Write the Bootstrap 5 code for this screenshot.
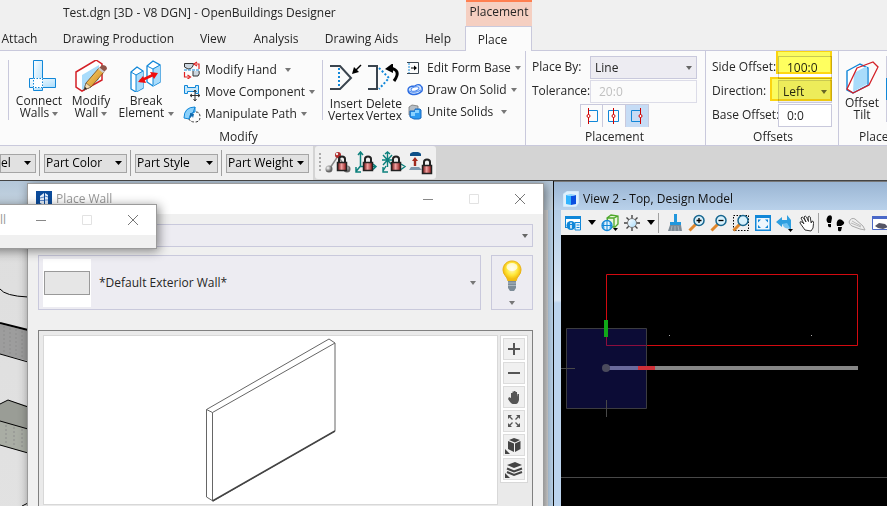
<!DOCTYPE html>
<html lang="en">
<head>
<meta charset="utf-8">
<meta name="viewport" content="width=device-width, initial-scale=1">
<title>OpenBuildings Designer</title>
<link href="https://cdn.jsdelivr.net/npm/bootstrap@5.3.0/dist/css/bootstrap.min.css" rel="stylesheet">
<style>
:root{--line:#c9c9dc;--face:#edecf2;--blue:#1187d8}
body{font-family:"Open Sans","Noto Sans",sans-serif;font-size:12px;line-height:16px;color:#262626;background:#d4d4d4}
svg{display:block;flex:none}
button,select,input{font:inherit;color:inherit;border-radius:0}
button{background:none;border:0;padding:0}
.app-shell{height:100vh}
.app-head{background:#f0f0f0;height:51px;box-shadow:inset 0 -1px var(--line);flex:none}
.app-title{height:26px;padding-left:63px;width:466px}
.context-tab{width:66px;height:26px;background:#f5cfc1;border-top:2px solid #ff7f50;padding-top:2px;white-space:nowrap}
.tab-strip{height:25px}
.tab-strip button{flex:0 0 auto;height:25px;white-space:nowrap;line-height:23px}
.w-a{width:51px;padding-right:12px}.w-b{width:135px}.w-c{width:54px}.w-d{width:72px}.w-e{width:99px}
.tab-strip .tab-on{width:67px;background:#fbfbfb;border:1px solid var(--line);border-bottom:0;padding-right:12px}
.ribbon{background:#fbfbfb;border-bottom:1px solid var(--line);height:95px;flex:none}
.rib-group{padding-top:5px}
.rib-group+.rib-group{border-left:1px solid var(--line)}
.rib-body{height:73px}
.rib-label{height:16px;line-height:16px}
.inner-rule{width:1px;height:60px;margin-top:4px;background:var(--line);flex:none}
.big-btn{line-height:12px;display:flex;flex-direction:column;align-items:center;text-align:center;white-space:nowrap;flex:none}
.big-btn svg.pic{margin-bottom:3px}
.b-48{width:46px}.b-52{width:52px}.b-58{width:58px}.b-38{width:38px}
.col-edit{width:147px;padding:3px 0 0 8px}
.col-solid{width:122px;padding:1px 0 0 4px}
.small-btn{height:22px;display:flex;align-items:center;white-space:nowrap}
.tri{display:inline-block;width:0;height:0;border:3px solid transparent;border-top:4px solid #777;border-bottom:0;vertical-align:middle}
.field-row{height:24px}
.fld{height:23px;border:1px solid var(--line);background:#fff;padding:0 8px;min-width:0}
select.fld,.tool-select{appearance:none;background:var(--face) url("data:image/svg+xml,%3Csvg xmlns='http://www.w3.org/2000/svg' width='6' height='4'%3E%3Cpath d='M0 0h6L3 4z' fill='%23666'/%3E%3C/svg%3E") no-repeat right 4px center}
select.fld{padding-left:4px}
.fld:disabled{color:#c0c0c0;background:#fbfbfb;opacity:1;border-color:#dcdce8}
.group-placement{width:180px;padding-left:6px}
.lbl-a{width:58px;line-height:22px;white-space:nowrap}.sel-a{width:107px}
.seg-row{padding-left:48px}
.seg{width:23px;height:23px;border:1px solid var(--line);border-bottom:0}
.seg+.seg{border-left:0}
.seg-on{background:#c6dcf5}
.group-offsets{width:133px;padding-left:6px}
.lbl-b{width:66px;line-height:22px;white-space:nowrap}.sel-b{width:54px}
.hl{position:absolute;background:#ffff00a0;border:2px solid #ffcf00d0;mix-blend-mode:multiply;pointer-events:none}
.hl-one{left:64px;top:-6px;width:56px;height:24px}
.hl-two{left:58px;top:-3px;width:62px;height:24px}
.edge-strip{width:20px;height:66px;margin-left:1px;background:linear-gradient(#ccd 0 22px,#1187d8 22px 44px,#ccd 44px)}
.last-label{padding-left:20px}
.toolbars{height:35px;border-bottom:1px solid #444;flex:none}
.bar-a{background:#f0f0f0;width:313px;height:34px}
.bar-b{background:#f0f0f0;border-radius:3px;height:33px;width:121px;margin-left:2px}
.tool-select{height:19px;border:1px solid #a5a5a5;background-color:#e1e1e1;padding:0 0 0 1px;color:#000;width:83px;background-image:url("data:image/svg+xml,%3Csvg xmlns='http://www.w3.org/2000/svg' width='7' height='4'%3E%3Cpath d='M0 0h7L3.5 4z' fill='%23000'/%3E%3C/svg%3E")}
.sel-cut{width:36px;padding:0}
.v-rule{width:1px;height:26px;background:#a0a0a0;margin:0 4px 0 3px}
.grip{width:2px;height:20px;background:repeating-linear-gradient(#aaa 0 2px,transparent 2px 4px)}
.workspace{min-height:0}
.pane-left{width:554px;background:linear-gradient(90deg,#bccde0,#bcd5ec);border-right:1px solid #111}
.pane-head{height:29px;background:linear-gradient(#b4c7d9,#c8d6e2)}
.pane-scene{height:100%;width:548px;background:linear-gradient(#dedede,#e2e2e2)}
.dlg{position:absolute;background:#f0f0f0;border:1px solid #9b9b9b;box-shadow:2px 2px 10px #0007}
.dlg-place{left:27px;top:2px;width:517px;height:400px}
.dlg-front{left:-200px;top:23px;width:357px;height:45px}
.dlg-title{background:#fff;height:30px;color:#999}
.dlg-buttons{width:138px}
.front-gap{margin-left:12px}
.dlg-body{padding:10px 10px 0}
.combo-btn{height:55px;border:1px solid var(--line);background:var(--face)}
.thumb{width:48px;height:48px;background:#fff}
.thumb span{width:46px;height:24px;border:1px solid #999;background:#e6e6e6}
.bulb-btn{width:42px;margin-left:10px}
.preview{border:1px solid #808080;background:#eaeaea;margin-top:20px;padding:4px;height:260px}
.preview-page{height:170px;background:#fff;border:1px solid #d8d8d8}
.preview-tools{width:28px;height:148px;background:#fff;border:1px solid #d8d8d8;padding-top:2px;gap:2px;margin-left:2px}
.preview-tools button{width:22px;height:22px;background:#f0f0f0;border:1px solid #dcdcdc}
.view-win{background:linear-gradient(#a2c0de 0,#b9d1ea 40px,#d9e6f4 118px,#bcd4ee 121px);padding-left:7px;border-top:1px solid #777}
.view-title{height:28px;background:linear-gradient(#9ab5d3,#b9d1ea);margin-left:-7px;padding-left:9px;padding-top:6px;color:#111}
.view-name{margin-left:4px}
.view-tools{height:25px;background:#f0f0f0;padding-left:1px}
.view-tools button{width:22px;flex:none;display:flex;justify-content:center}
.view-tools .drop{width:15px}
.tool-gap{width:6px;flex:none}
.tool-gap span{width:1px;height:20px;background:#a0a0a0}
.tri-black{border:4px solid transparent;border-top:5px solid #000;border-bottom:0}
.canvas-black{background:#000;min-height:0}
</style>
<script src="https://cdn.jsdelivr.net/npm/bootstrap@5.3.0/dist/js/bootstrap.bundle.min.js"></script>
</head>
<body class="overflow-hidden">
<svg width="0" height="0" class="position-absolute" aria-hidden="true">
<defs>
<linearGradient id="sky" x2="1" y2="1"><stop stop-color="#fff"/><stop offset="1" stop-color="#a9dcfb"/></linearGradient>
<linearGradient id="lockred"><stop stop-color="#6b0d0d"/><stop offset=".45" stop-color="#f0a0a0"/><stop offset="1" stop-color="#8c1212"/></linearGradient>
<linearGradient id="gold" x2="1" y2="1"><stop stop-color="#ffe07a"/><stop offset="1" stop-color="#c87a10"/></linearGradient>
<radialGradient id="ball" cx=".35" cy=".35"><stop stop-color="#fff"/><stop offset="1" stop-color="#666"/></radialGradient>
<radialGradient id="glow" cy=".4"><stop stop-color="#fffbd0"/><stop offset=".6" stop-color="#ffe93c"/><stop offset="1" stop-color="#f3bd10"/></radialGradient>
<symbol id="lock" viewBox="0 0 12 17"><path d="M3 8V4q0-2.500 3-2.500T9 4v4" fill="none" stroke="#222" stroke-width="2"/><path d="M1.500 7.500h9v8h-9z" fill="url(#lockred)" stroke="#222" stroke-width="1.500"/></symbol>
<symbol id="lens" viewBox="0 0 18 18"><path d="M1.500 16.500L8 10" stroke="#e0862a" stroke-width="3"/><circle cx="11" cy="6.500" r="5" fill="#d8f1fc" stroke="#17668f" stroke-width="1.500"/></symbol>
</defs>
</svg>

<div class="app-shell d-flex flex-column">
<header class="app-head">
  <div class="d-flex">
    <div class="app-title d-flex align-items-center text-nowrap">Test.dgn [3D - V8 DGN] - OpenBuildings Designer</div>
    <div class="context-tab text-center">Placement</div>
  </div>
  <nav class="tab-strip d-flex" aria-label="Ribbon tabs">
    <button class="w-a">Attach</button><button class="w-b">Drawing Production</button><button class="w-c">View</button><button class="w-d">Analysis</button><button class="w-e">Drawing Aids</button><button class="w-c">Help</button><button class="tab-on">Place</button>
  </nav>
</header>

<section class="ribbon d-flex overflow-hidden">
  <div class="rib-group flex-shrink-0">
    <div class="rib-body d-flex ps-2">
      <div class="inner-rule"></div>
      <div class="d-flex ps-1 pt-1">
        <button class="big-btn b-52"><svg class="pic" width="34" height="32"><path d="M11.500 .500h9v30h-9z" fill="url(#sky)" stroke="#1187d8"/><path d="M7.500 18.500h26v9h-26z" fill="url(#sky)" stroke="#1187d8"/><path d="M11.500 18.500h9v9h-9z" fill="#fff" stroke="#fff"/><path d="M11.500 18.500h9v9h-9z" fill="none" stroke="#1187d8" stroke-dasharray="1.500 1.500"/></svg>Connect<br><span>Walls <i class="tri"></i></span></button>
        <button class="big-btn b-52"><svg class="pic" width="34" height="32" viewBox="0 2 34 32"><path d="M2 14L22 2l6 4v16L8 33l-6-4z" fill="#fff" stroke="#d42027" stroke-width="1.500"/><path d="M8 17L25 7v15L8 32z" fill="#a9dcfb"/><path d="M10 32l2-7L25 10l5 4-13 15z" fill="url(#gold)" stroke="#75420e" stroke-width=".8"/><path d="M10 32l2-7 5 4z" fill="#f6ddb0" stroke="#555" stroke-width=".6"/><path d="M10 32l1-3 2 1.600z" fill="#222"/><path d="M25 10l3-3q5 0 5 4l-3 3z" fill="#8f5448"/><path d="M24 11l5 4 1.500-1.500-5-4z" fill="#ccc"/></svg>Modify<br><span>Wall <i class="tri"></i></span></button>
        <button class="big-btn b-58"><svg class="pic" width="34" height="32" viewBox="0 1 34 32"><path d="M2 13l6-5 6 4v17l-7 4-5-3z M18 7l6-5 7 4v17l-7 4-6-4z" fill="#fff" stroke="#1187d8" stroke-width="1.300"/><path d="M7 16l7-4v17l-7 4zM24 9l7-3v17l-7 4z" fill="#a9dcfb"/><path d="M2 13l5 3v17m0-17l7-4M18 7l6 3v16m0-16l7-4" fill="none" stroke="#1187d8"/><path d="M11 22l15-7" stroke="#f00d0d" stroke-width="2.500"/><path d="M9 23l5-6 3 7zM29 14l-8-1 4 7z" fill="#f00d0d"/></svg>Break<br><span>Element <i class="tri"></i></span></button>
      </div>
      <div class="col-edit">
        <button class="small-btn"><svg width="18" height="18"><path d="M1.500 6V2.500h9Q10 8 5 8zM10 10v5h5q2-2 1-5" fill="#ccd6df" stroke="#333"/><path d="M1 9h15" stroke="#1187d8" stroke-dasharray="3 1"/><path d="M1.500 11v5h4m-1-2l3 2-3 2M16 8V3h-3m1-2l-3 2 3 2" fill="none" stroke="#e02020" stroke-width="1.200"/></svg><span class="ms-1">Modify Hand</span><i class="tri ms-2"></i></button>
        <button class="small-btn"><svg width="18" height="18"><path d="M1.500 2.500h3v2h8v-2h3v8h-3v-2h-8v2h-3z" fill="#c5e8fc" stroke="#1187d8"/><path d="M12 7v11M7 12.500h10M10.500 9L12 7l1.500 2m-3 7l1.500 2 1.500-2M9 11l-2 1.500L9 14m6-3l2 1.500-2 1.500" fill="none" stroke="#333"/></svg><span class="ms-1">Move Component</span><i class="tri ms-1"></i></button>
        <button class="small-btn"><svg width="18" height="18"><path d="M1 13Q1 2 12 2v5Q7 7 6 14z" fill="#8bd0fa" stroke="#1187d8"/><path d="M12 2l-2 6-4 6" stroke="#1187d8" fill="none"/><path d="M7 8l4 1-1 4-1-2-2 2" fill="#1269ac"/><path d="M13 7q4 0 4 5t-5 5-6-3" fill="none" stroke="#333" stroke-dasharray="2.500 1.500"/></svg><span class="ms-1">Manipulate Path</span><i class="tri ms-1"></i></button>
      </div>
      <div class="inner-rule"></div>
      <div class="d-flex pt-2 ps-1">
        <button class="big-btn b-38"><svg class="pic" width="34" height="31" viewBox="0 3 34 31"><path d="M1 5h10L22 17 11 28H1" fill="none" stroke="#3a444e" stroke-width="2"/><path d="M10 7v20" stroke="#1187d8" stroke-width="2" stroke-dasharray="2 2"/><path d="M32 4l-6 6" stroke="#000" stroke-width="1.500"/><path d="M23 13l2-7 5 5z"/></svg>Insert<br>Vertex</button>
        <button class="big-btn b-38"><svg class="pic" width="34" height="31" viewBox="0 3 34 31"><path d="M1 5h9v23H1" fill="none" stroke="#3a444e" stroke-width="2"/><path d="M12 7l10 10-10 11" fill="none" stroke="#1187d8" stroke-width="2" stroke-dasharray="2 2"/><path d="M23 7q12 2 4 13" fill="none" stroke="#000" stroke-width="3"/><path d="M18 8l8-6v10z"/></svg>Delete<br>Vertex</button>
      </div>
      <div class="col-solid">
        <button class="small-btn"><svg width="16" height="16"><path d="M0 2.500h11.500v11H0" fill="none" stroke="#3a444e"/><path d="M2 3v10" stroke="#1187d8" stroke-dasharray="2 1"/><path d="M4 8h4" stroke="#000"/><path d="M7 5.500L10 8l-3 2.500z"/></svg><span class="ms-1">Edit Form Base</span><i class="tri ms-1"></i></button>
        <button class="small-btn"><svg width="16" height="16"><path d="M1 8q0-4 7-4 2-2 5-1 3 2 2 6-5 5-11 3Q1 11 1 8z" fill="#d7e9ff" stroke="#2b6be0" stroke-width="1.400"/><ellipse cx="8" cy="7" rx="4" ry="2" fill="#fff" stroke="#4b87ee" transform="rotate(-15 8 7)"/><path d="M2 9q5 3 12-1" stroke="#4b87ee" fill="none"/></svg><span class="ms-1">Draw On Solid</span><i class="tri ms-1"></i></button>
        <button class="small-btn"><svg width="16" height="16"><path d="M2 3l3-2 6 1v8l-3 2-6-1z" fill="#b6bec6" stroke="#777" stroke-width=".8"/><path d="M3 7h5V5h5l1 1v8l-2 1H7l-4-2z" fill="#2d9af0" stroke="#1768c0"/><path d="M4 8h4V6h4v3H8v3H4z" fill="#8ad2ff"/></svg><span class="ms-1">Unite Solids</span><i class="tri ms-2"></i></button>
      </div>
    </div>
    <div class="rib-label text-center pe-5">Modify</div>
  </div>

  <div class="rib-group group-placement flex-shrink-0">
    <div class="rib-body">
      <div class="field-row d-flex"><label class="lbl-a" for="placeBy">Place By:</label><select id="placeBy" class="fld sel-a"><option>Line</option></select></div>
      <div class="field-row d-flex"><label class="lbl-a" for="tol">Tolerance:</label><input id="tol" class="fld sel-a" value="20:0" disabled></div>
      <div class="seg-row d-flex">
        <button class="seg" aria-label="Place left"><svg width="21" height="22"><path d="M7 5.500h9.500v11H7" fill="none" stroke="#1187d8"/><path d="M7.500 3v16" stroke="#d00000"/><circle cx="7.500" cy="11" r="1.500" fill="#fff" stroke="#d00000"/></svg></button><button class="seg" aria-label="Place center"><svg width="21" height="22"><path d="M5.500 5.500h10v11h-10z" fill="none" stroke="#1187d8"/><path d="M10.500 3v16" stroke="#d00000"/><circle cx="10.500" cy="11" r="1.500" fill="#fff" stroke="#d00000"/></svg></button><button class="seg seg-on" aria-label="Place right"><svg width="21" height="22"><path d="M14 5.500H5.500v11H14" fill="none" stroke="#1187d8"/><path d="M14.500 3v16" stroke="#d00000"/><circle cx="14.500" cy="11" r="1.500" fill="#fff" stroke="#d00000"/></svg></button>
      </div>
    </div>
    <div class="rib-label text-center pe-2">Placement</div>
  </div>

  <div class="rib-group group-offsets flex-shrink-0">
    <div class="rib-body">
      <div class="field-row d-flex position-relative"><label class="lbl-b" for="side">Side Offset:</label><input id="side" class="fld sel-b" value="100:0"><span class="hl hl-one"></span></div>
      <div class="field-row d-flex position-relative"><label class="lbl-b" for="dir">Direction:</label><select id="dir" class="fld sel-b"><option>Left</option></select><span class="hl hl-two"></span></div>
      <div class="field-row d-flex"><label class="lbl-b" for="base">Base Offset:</label><input id="base" class="fld sel-b" value="0:0"></div>
    </div>
    <div class="rib-label text-center pe-1">Offsets</div>
  </div>

  <div class="rib-group flex-fill overflow-hidden">
    <div class="rib-body d-flex">
      <button class="big-btn b-48 pt-1"><svg class="pic" width="34" height="34"><path d="M2 11L15 4l8 4v17L8 33l-6-3z" fill="#fff" stroke="#1187d8" stroke-width="1.400"/><path d="M9 13l13-7v18L8 32z" fill="#a9dcfb"/><path d="M12 8l16-6 5 5-9 18L8 33l-6-4z" fill="none" stroke="#d42027" stroke-width="1.300"/></svg>Offset<br>Tilt</button>
      <div class="edge-strip flex-shrink-0"></div>
    </div>
    <div class="rib-label last-label text-nowrap">Place</div>
  </div>
</section>

<div class="toolbars d-flex">
  <div class="bar-a d-flex align-items-center overflow-hidden">
    <select class="tool-select sel-cut" aria-label="Part Level"><option>el</option></select><span class="v-rule"></span>
    <select class="tool-select" aria-label="Part Color"><option>Part Color</option></select><span class="v-rule"></span>
    <select class="tool-select" aria-label="Part Style"><option>Part Style</option></select><span class="v-rule"></span>
    <select class="tool-select" aria-label="Part Weight"><option>Part Weight</option></select>
  </div>
  <div class="bar-b d-flex align-items-center ps-1">
    <span class="grip me-1"></span>
    <button aria-label="Graphic group lock"><svg width="26" height="24"><path d="M5 17L13 5l8 12" stroke="#888" stroke-width="1.500" fill="none"/><circle cx="4" cy="18" r="3.500" fill="url(#ball)"/><circle cx="22" cy="18" r="3.500" fill="url(#ball)"/><circle cx="13" cy="4" r="3" fill="#b02a2a"/><circle cx="12" cy="3" r="1.200" fill="#eee"/><use href="#lock" x="11" y="4" width="12" height="17"/></svg></button>
    <button class="ms-1" aria-label="ACS lock"><svg width="26" height="24"><path d="M5.500 1v14L1 20.500M5 15.500h15M3 4l2.500-3L8 4M1 16v5h5M18 13l3 2.500-3 3" fill="none" stroke="#0b807c" stroke-width="1.500"/><use href="#lock" x="7" y="4" width="12" height="17"/></svg></button>
    <button aria-label="Snap lock"><svg width="28" height="24"><path d="M6.500 1v15M1 9h12M2 4l9 10M11 4L2 14M4 3l2.500-2L9 3M5 15l-3 5m0-4v5h5M20 13l4 2.500-4 3" fill="none" stroke="#0b807c" stroke-width="1.400"/><use href="#lock" x="9" y="4" width="12" height="17"/></svg></button>
    <button aria-label="Level lock"><svg width="26" height="24"><path d="M1 3q0-1 3-2h5q3 1 3 2v2H1z" fill="#0e4f87"/><path d="M6 6l3 4H7.200v5H4.800v-5H3z" fill="#a12a1e"/><path d="M2 16h8l3 3H0z" fill="#7f98ac"/><use href="#lock" x="12" y="7" width="12" height="17"/></svg></button>
  </div>
</div>

<main class="workspace d-flex flex-fill overflow-hidden">
  <section class="pane-left position-relative flex-shrink-0 overflow-hidden d-flex flex-column" aria-label="View 1">
    <div class="pane-head flex-shrink-0"></div>
    <div class="pane-scene"><svg width="548" height="320" viewBox="0 210 548 320" aria-hidden="true">
      <path d="M0 324l28 7v30l-28-7z" fill="#9d9d9d"/><path d="M0 404l8-4 20 6v47l-28-8z" fill="#9a9d96"/><path d="M0 421l28 8v24l-28-8z" fill="#a9ada4"/>
      <path d="M0 289q5 7 28 8M0 354l28 8M0 404l8-4 20 7M0 421l28 8M0 445l28 8M22 506l6-3" fill="none" stroke="#000"/><path d="M0 323l28 7" stroke="#000" stroke-width="2"/>
      <path d="M4 326v28M10 328v28M16 329v28M22 331v28M6 425v20M14 427v20M22 429v20" stroke="#8d8d8d" stroke-dasharray="2 2"/>
    </svg></div>

    <section class="dlg dlg-place" aria-label="Place Wall">
      <div class="dlg-title d-flex align-items-center ps-2">
        <svg width="16" height="16"><rect width="16" height="16" fill="#0b4b9b"/><path d="M4 5l4-3v12l-4-2zM9 2l3 2v9l-3 1z" fill="#e4eefb"/><path d="M4 7l4-1M4 9.500h4M9 5l3 1M9 9h3M2 13l6 2" stroke="#5a86c8"/></svg>
        <span class="ms-1 flex-fill">Place Wall</span>
        <div class="dlg-buttons d-flex"><button class="flex-fill" aria-label="Minimize"><svg class="mx-auto" width="12" height="12"><path d="M1 6.500h10" stroke="#888"/></svg></button><button class="flex-fill" aria-label="Maximize"><svg class="mx-auto" width="12" height="12"><path d="M1.500 1.500h9v9h-9z" fill="none" stroke="#e2e2e2"/></svg></button><button class="flex-fill" aria-label="Close"><svg class="mx-auto" width="12" height="12"><path d="M1 1l10 10M11 1L1 11" stroke="#777"/></svg></button></div>
      </div>
      <div class="dlg-body">
        <select class="fld w-100 d-block" aria-label="Catalog"><option></option></select>
        <div class="d-flex mt-2">
          <button class="combo-btn flex-fill d-flex align-items-center px-1"><span class="thumb d-flex align-items-center justify-content-center"><span></span></span><span class="ms-2">*Default Exterior Wall*</span><i class="tri ms-auto"></i></button>
          <button class="combo-btn bulb-btn d-flex flex-column align-items-center justify-content-between" aria-label="Hints"><svg class="mt-1" width="22" height="32"><path d="M11 1C5.500 1 2 5 2 10c0 5 4 6 5 11h8c1-5 5-6 5-11 0-5-3.500-9-9-9z" fill="url(#glow)" stroke="#eab416"/><ellipse cx="11" cy="7" rx="5.500" ry="4" fill="#fff" opacity=".7"/><path d="M7 21h8v7l-2 3H9l-2-3z" fill="#7d8c98"/><path d="M7 23h8M7 25.500h8" stroke="#aab6bf"/></svg><i class="tri mb-1"></i></button>
        </div>
        <div class="preview d-flex">
          <div class="preview-page flex-fill"><svg width="452" height="168" viewBox="44 336 452 168" aria-hidden="true"><path d="M206.500 409.500L329 339l6 4v88l-122 70-6.500-4z M206.500 409.500l6 3L335 343M212.500 412.500V501" fill="none" stroke="#666"/><path d="M212.500 501L335 431" stroke="#444" stroke-width="1.600"/></svg></div>
          <div class="preview-tools d-flex flex-column align-items-center">
            <button aria-label="Zoom in"><svg width="20" height="20"><path d="M10 4v12M4 10h12" stroke="#555" stroke-width="2"/></svg></button>
            <button aria-label="Zoom out"><svg width="20" height="20"><path d="M4 10h12" stroke="#555" stroke-width="2"/></svg></button>
            <button aria-label="Pan"><svg width="20" height="20"><path d="M5 10l2 1V6h1.500v3V4.500H10V9V4h1.500v5V5H13v5l.500-3H15v6q-1 4-3 4H9q-2 0-5-5z" fill="#555"/></svg></button>
            <button aria-label="Fit"><svg width="20" height="20"><path d="M4 8V4h4zM12 4h4v4zM4 12v4h4zM16 12v4h-4z" fill="#555"/><path d="M5 5l3.500 3.500M15 5l-3.500 3.500M5 15l3.500-3.500M15 15l-3.500-3.500" stroke="#555" stroke-width="1.300"/></svg></button>
            <button aria-label="View rotation"><svg width="20" height="20"><path d="M5 5l5-2 6 2-5 2.500zM4 6l6 2.500V17l-6-3zM16.500 6L11 8.500V17l5.500-3z" fill="#444"/><path d="M1 14v5h5z" fill="#444"/></svg></button>
            <button aria-label="Display style"><svg width="20" height="20"><path d="M3 6l8-3 7 3-8 3z" fill="#444"/><path d="M3 9.500l7 3 8-3M3 13l7 3 8-3" fill="none" stroke="#444" stroke-width="2"/><path d="M1 14v5h5z" fill="#444"/></svg></button>
          </div>
        </div>
      </div>
    </section>

    <section class="dlg dlg-front" aria-label="Wall">
      <div class="dlg-title d-flex align-items-center justify-content-end"><span>Wall</span>
        <div class="dlg-buttons front-gap d-flex"><button class="flex-fill" aria-label="Minimize"><svg class="mx-auto" width="12" height="12"><path d="M1 6.500h10" stroke="#888"/></svg></button><button class="flex-fill" aria-label="Maximize"><svg class="mx-auto" width="12" height="12"><path d="M1.500 1.500h9v9h-9z" fill="none" stroke="#e2e2e2"/></svg></button><button class="flex-fill" aria-label="Close"><svg class="mx-auto" width="12" height="12"><path d="M1 1l10 10M11 1L1 11" stroke="#777"/></svg></button></div>
      </div>
    </section>
  </section>

  <section class="view-win flex-fill d-flex flex-column overflow-hidden" aria-label="View 2">
    <div class="view-title d-flex align-items-center flex-shrink-0"><svg width="16" height="16"><path d="M0 3l4-3h12v12l-3 4H0z" fill="#dff0fc" stroke="#b5d8f4" stroke-width=".6"/><path d="M3 4l5 1v9l-5-1z" fill="#32b4ff"/><path d="M8 5l5-1v9l-5 1z" fill="#0a4fe0"/><path d="M3 4l5-1 5 1-5 1z" fill="#8bd5ff"/></svg><span class="view-name">View 2 - Top, Design Model</span></div>
    <div class="view-tools d-flex align-items-center flex-shrink-0">
      <button aria-label="View attributes"><svg width="18" height="18"><path d="M1 2h16v12H1z" fill="#1187d8"/><path d="M2 5h14v8H2z" fill="#fff"/><circle cx="7" cy="11.500" r="4.500" fill="#1187d8"/><path d="M7 8.500v1.500M7 11v3.500" stroke="#fff" stroke-width="1.500"/><path d="M11 8.500h5.500v7.500H11z" fill="#e8f5fd" stroke="#1187d8"/><path d="M12.500 11h3M12.500 13.500h3" stroke="#1187d8"/></svg></button><button class="drop" aria-label="View attributes menu"><i class="tri tri-black"></i></button>
      <button aria-label="Models"><svg width="18" height="18"><path d="M6 4l4-3 7 1v8l-3 3H8z M6 4h7v9M13 4l4-2" fill="#eaf7dc" stroke="#4fa82b" stroke-width="1.300"/><circle cx="6" cy="11.500" r="5" fill="#e5f4fd" stroke="#1187d8" stroke-width="1.300"/><path d="M1 11.500h10M6 7v9M3 8.500q-1 3 0 6M9 8.500q1 3 0 6" fill="none" stroke="#1187d8"/><path d="M12 14h5l-2.500 3z"/></svg></button>
      <button aria-label="Brightness"><svg width="18" height="18"><path d="M9 1v16M1 9h16M3.500 3.500l11 11M14.500 3.500l-11 11" stroke="#444" stroke-width="1.400"/><circle cx="9" cy="9" r="4.500" fill="url(#sky)" stroke="#777"/></svg></button><button class="drop" aria-label="Brightness menu"><i class="tri tri-black"></i></button>
      <div class="tool-gap d-flex"><span></span></div>
      <button aria-label="Update view"><svg width="18" height="18"><path d="M8 0h3v8h4v3H4V8h4z" fill="#2297dc"/><path d="M4 11h11l1 6H2z" fill="#7d8a95"/><path d="M6 12l-1 5M9 12v5M12 12l1 5" stroke="#a9b4bd"/></svg></button>
      <button aria-label="Zoom in"><svg width="18" height="18"><use href="#lens" width="18" height="18"/><path d="M8.500 6.500h5M11 4v5" stroke="#000" stroke-width="1.300"/></svg></button>
      <button aria-label="Zoom out"><svg width="18" height="18"><use href="#lens" width="18" height="18"/><path d="M8.500 6.500h5" stroke="#000" stroke-width="1.300"/></svg></button>
      <button aria-label="Window area"><svg width="18" height="18"><path d="M1.500 1.500h15v15h-15z" fill="none" stroke="#000" stroke-dasharray="1.500 1.500"/><use href="#lens" width="18" height="18"/></svg></button>
      <button aria-label="Fit view"><svg width="18" height="18"><path d="M1 1h16v16H1z" fill="#1187d8"/><path d="M2.500 4h13v11.500h-13z" fill="#eef7fd"/><path d="M4 5.500h3l-3 3zM14 5.500h-3l3 3zM4 14h3l-3-3zM14 14h-3l3-3z" fill="#1187d8"/></svg></button>
      <button aria-label="Rotate view"><svg width="18" height="18"><path d="M0 8l6-5v3h5V1l4 5v10l-4-3v-3H6v3z" fill="#2f9fe0"/><path d="M6 10q3 6 8 4l-3-5z" fill="#71c3f2"/><path d="M12 15h5l-2.500 3z"/></svg></button>
      <button aria-label="Pan view"><svg width="18" height="18"><path d="M7 16L2 9q-.500-2 2-1l2 2-3-6q1-2 2.500 0L8 8 6 3q1-2 2.500 0l2 4.500L10 3q1.500-1.500 2.200 0l1 6 .8-2q2 0 1.500 2.500L15 14l-2 3z" fill="#fff" stroke="#333"/></svg></button>
      <div class="tool-gap d-flex"><span></span></div>
      <button aria-label="Walk"><svg width="20" height="18"><path d="M3 2q4-2 4 2L6 9H3Q0 6 3 2zM3 10h3v3q-2 1-3-1zM13 6q-2 2-1 6h4q4-2 3-4-3-4-6-2zM13 13h4l-1 4q-3 1-3-1z"/></svg></button>
      <button aria-label="Fly"><svg width="18" height="18"><path d="M1 8q2-5 6-3l8 7 2 4-5-1-8-3q-2-1-3-4z" fill="#eee" stroke="#aaa"/><path d="M4 7l9 5M3 9l10 4" stroke="#bbb"/></svg></button>
      <button aria-label="Navigate view"><svg width="18" height="18"><path d="M2.500 2.500h15v13h-15z" fill="#fff" stroke="#4a68c8"/><path d="M2 2h16v3H2z" fill="#4a68c8"/><path d="M5 12l4-3 6 1 3 3-5 2-5-1z" fill="#556"/></svg></button>
    </div>
    <div class="canvas-black flex-fill"><svg width="100%" height="100%" viewBox="561 235 326 271" preserveAspectRatio="xMinYMin slice" aria-hidden="true">
      <path d="M606.500 274.500h251v71h-251z" fill="none" stroke="#d20a10"/>
      <path d="M606 366h252v4H606z" fill="#868686"/>
      <path d="M566.500 328.500h80v80h-80z" fill="#101048" fill-opacity=".75" stroke="#3c3c40"/>
      <path d="M606.500 329v16.500H646" fill="none" stroke="#8c0e3e"/><path d="M606 366h32v4h-32z" fill="#6a6a9c"/><path d="M638 366h17v4h-17z" fill="#cf3038"/>
      <path d="M604 320h4v17h-4z" fill="#10a818"/><circle cx="606" cy="368" r="4" fill="#4a4a5c"/>
      <path d="M561 368.500h14M606.500 400v17M561 477.500h326" stroke="#484848"/><path d="M669 335h1v1h-1zM811 335h1v1h-1z" fill="#aaa"/>
    </svg></div>
  </section>
</main>
</div>
</body>
</html>
